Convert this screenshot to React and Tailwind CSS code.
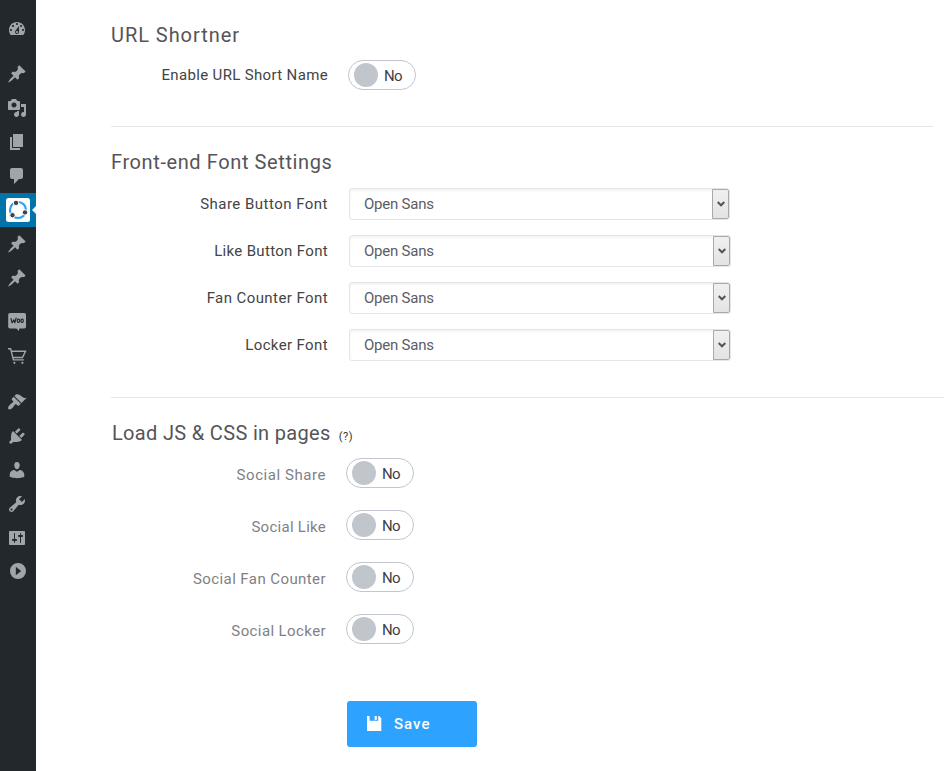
const PIN =
  "M10.44 3.02l1.82-1.82 6.36 6.35-1.83 1.82c-1.05-.68-2.48-.57-3.41.36l-.75.75c-.92.93-1.04 2.35-.35 3.41l-1.83 1.82-2.41-2.41-2.8 2.79c-.42.42-3.38 2.71-3.8 2.29s1.86-3.39 2.28-3.81l2.79-2.79L4.1 9.36l1.83-1.82c1.05.69 2.48.57 3.4-.36l.75-.75c.93-.92 1.05-2.35.36-3.41z";

const ICONS = {
  dashboard:
    "M3.76 16h12.48c1.1-1.37 1.76-3.11 1.76-5 0-4.42-3.58-8-8-8s-8 3.58-8 8c0 1.89.66 3.63 1.76 5zM10 4c.55 0 1 .45 1 1s-.45 1-1 1-1-.45-1-1 .45-1 1-1zM6 6c.55 0 1 .45 1 1s-.45 1-1 1-1-.45-1-1 .45-1 1-1zm8 0c.55 0 1 .45 1 1s-.45 1-1 1-1-.45-1-1 .45-1 1-1zm-5.37 5.55L12 7v6c0 1.1-.9 2-2 2s-2-.9-2-2c0-.57.24-1.08.63-1.45zM4 10c.55 0 1 .45 1 1s-.45 1-1 1-1-.45-1-1 .45-1 1-1zm12 0c.55 0 1 .45 1 1s-.45 1-1 1-1-.45-1-1 .45-1 1-1zm-5 3c0-.55-.45-1-1-1s-1 .45-1 1 .45 1 1 1 1-.45 1-1z",
  media:
    "M13 11V4c0-.55-.45-1-1-1h-1.67L9 1H5L3.67 3H2c-.55 0-1 .45-1 1v7c0 .55.45 1 1 1h10c.55 0 1-.45 1-1zM7 4.5c1.38 0 2.5 1.12 2.5 2.5S8.38 9.5 7 9.5 4.5 8.38 4.5 7 5.62 4.5 7 4.5zM14 6h5v10.5c0 1.38-1.12 2.5-2.5 2.5S14 17.88 14 16.5s1.12-2.5 2.5-2.5c.17 0 .34.02.5.05V9h-3V6zm-4 8.05V13h2v3.5c0 1.38-1.12 2.5-2.5 2.5S7 17.88 7 16.5 8.12 14 9.5 14c.17 0 .34.02.5.05z",
  page: "M6 15V2h10v13H6zm-1 1h8v2H3V5h2v11z",
  comment:
    "M5 2h9c1.1 0 2 .9 2 2v7c0 1.1-.9 2-2 2h-2l-5 5v-5H5c-1.1 0-2-.9-2-2V4c0-1.1.9-2 2-2z",
  appearance:
    "M14.48 11.06L7.41 3.99l1.5-1.5c.5-.56 2.3-.47 3.51.32 1.21.8 1.43 1.28 2.91 2.1 1.18.64 2.45 1.26 4.45.85zm-.71.71L6.7 4.7 4.93 6.47c-.39.39-.39 1.02 0 1.41l1.06 1.06c.39.39.39 1.03 0 1.42-.6.6-1.43 1.11-2.21 1.69-.35.26-.7.53-1.01.84C1.43 14.23.4 16.08 1.4 17.07c.99 1 2.84-.03 4.18-1.36.31-.31.58-.66.85-1.02.57-.78 1.08-1.61 1.69-2.21.39-.39 1.02-.39 1.41 0l1.06 1.06c.39.39 1.02.39 1.41 0z",
  plugins:
    "M13.11 4.36L9.87 7.6 8 5.73l3.24-3.24c.35-.34 1.05-.2 1.56.32.52.51.66 1.21.31 1.55zm-8 1.77l.91-1.12 9.01 9.01-1.19.84c-.71.71-2.63 1.16-3.82 1.16H6.14L4.9 17.26c-.59.59-1.54.59-2.12 0-.59-.58-.59-1.53 0-2.12l1.24-1.24v-3.88c0-1.13.4-3.19 1.09-3.89zm7.26 3.97l3.24-3.24c.34-.35 1.04-.21 1.55.31.52.51.66 1.21.31 1.55l-3.24 3.25z",
  users:
    "M10 9.25c-2.27 0-2.73-3.44-2.73-3.44C7 4.02 7.82 2 9.97 2c2.16 0 2.98 2.02 2.71 3.81 0 0-.41 3.44-2.68 3.44zm0 2.57L12.72 10c2.39 0 4.52 2.33 4.52 4.53v2.49s-3.65 1.13-7.24 1.13c-3.65 0-7.24-1.13-7.24-1.13v-2.49c0-2.25 1.94-4.48 4.47-4.48z",
  tools:
    "M16.68 9.77c-1.34 1.34-3.3 1.67-4.95.99l-5.41 6.52c-.99.99-2.59.99-3.58 0s-.99-2.59 0-3.57l6.52-5.42c-.68-1.65-.35-3.61.99-4.95 1.28-1.28 3.12-1.62 4.72-1.06l-2.89 2.89 2.82 2.82 2.86-2.87c.53 1.58.18 3.39-1.08 4.65zM3.81 16.21c.4.39 1.04.39 1.43 0 .4-.4.4-1.04 0-1.43-.39-.4-1.03-.4-1.43 0-.39.39-.39 1.03 0 1.43z",
  settings:
    "M18 16V4c0-.55-.45-1-1-1H3c-.55 0-1 .45-1 1v12c0 .55.45 1 1 1h14c.55 0 1-.45 1-1zM8 11h1c.55 0 1 .45 1 1s-.45 1-1 1H8v1.5c0 .28-.22.5-.5.5s-.5-.22-.5-.5V13H6c-.55 0-1-.45-1-1s.45-1 1-1h1V5.5c0-.28.22-.5.5-.5s.5.22.5.5V11zm5-2h-1c-.55 0-1-.45-1-1s.45-1 1-1h1V5.5c0-.28.22-.5.5-.5s.5.22.5.5V7h1c.55 0 1 .45 1 1s-.45 1-1 1h-1v5.5c0 .28-.22.5-.5.5s-.5-.22-.5-.5V9z",
};

function MenuItem({ d, children }) {
  return (
    <div className="flex h-[34px] items-center pl-[7px] text-[#a0a5aa]">
      <svg className="size-5 overflow-visible" viewBox="0 0 20 20" fill="currentColor" fillRule="evenodd">
        {d ? <path d={d} /> : children}
      </svg>
    </div>
  );
}

function Sidebar() {
  return (
    <nav className="flex w-9 shrink-0 flex-col bg-[#23282d] pt-3">
      <MenuItem d={ICONS.dashboard} />
      <div className="h-[11px]" />
      <MenuItem d={PIN} />
      <MenuItem d={ICONS.media} />
      <MenuItem d={ICONS.page} />
      <MenuItem d={ICONS.comment} />
      <div className="flex h-[34px] items-center justify-between bg-[#0073aa] pl-1.5">
        <svg className="size-6" viewBox="0 0 24 24" fill="none">
          <rect width="24" height="24" rx="2.5" fill="#fff" />
          <circle cx="12" cy="12" r="8" stroke="#27a0f5" strokeWidth="2.2" />
          <g fill="#3c4250" stroke="#fff" strokeWidth="1">
            <circle cx="10" cy="4.9" r="2.7" />
            <circle cx="19" cy="14.4" r="2.7" />
            <circle cx="6.5" cy="17.2" r="2.7" />
          </g>
        </svg>
        <svg className="h-2 w-1" viewBox="0 0 4 8">
          <path d="M4 0v8L0 4z" fill="#f1f1f1" />
        </svg>
      </div>
      <MenuItem d={PIN} />
      <MenuItem d={PIN} />
      <div className="h-[10px]" />
      <MenuItem>
        <path d="M3 .9h14.2a1.8 1.8 0 0 1 1.8 1.8v12a1.8 1.8 0 0 1-1.8 1.8h-4.8L11.7 19 9.5 16.5H3a1.8 1.8 0 0 1-1.8-1.8v-12A1.8 1.8 0 0 1 3 .9z" />
        <g fill="none" stroke="#23282d" strokeWidth="1.2" strokeLinejoin="round" strokeLinecap="round">
          <path d="M4 6.6l1.1 4.2 1.8-3 .9 3 1.3-4.6" />
          <ellipse cx="11.4" cy="8.8" rx="1.2" ry="1.6" />
          <ellipse cx="15.1" cy="8.8" rx="1.2" ry="1.6" />
        </g>
      </MenuItem>
      <MenuItem>
        <g fill="none" stroke="currentColor" strokeWidth="1.4">
          <path d="M1 2.7h2.6l2.8 11.2h10.4M4.5 5.2h14l-3 6.3H6" />
        </g>
        <circle cx="7.4" cy="16.8" r="1.1" />
        <circle cx="15.4" cy="16.8" r="1.1" />
      </MenuItem>
      <div className="h-3" />
      <MenuItem d={ICONS.appearance} />
      <MenuItem d={ICONS.plugins} />
      <MenuItem d={ICONS.users} />
      <MenuItem d={ICONS.tools} />
      <MenuItem d={ICONS.settings} />
      <MenuItem>
        <path d="M11 1a8 8 0 1 0 0 16 8 8 0 0 0 0-16zM8.8 4.7l5.4 4.3-5.4 4.3z" />
      </MenuItem>
    </nav>
  );
}

function Toggle() {
  return (
    <button className="flex h-[30px] w-[68px] items-center rounded-full border border-[#c1c5cd] bg-white pl-[5px] text-left text-[15px] tracking-[-0.6px] text-[#3f4047]">
      <span className="mr-[6px] size-6 rounded-full bg-[#c1c6cd]" />
      <span className="pt-[2px]">No</span>
    </button>
  );
}

function FontRow({ label, tracking, width = "w-[382px]" }) {
  return (
    <div className="mb-[15px] flex h-8 items-center">
      <span className={`w-[217px] text-right text-[15px] text-[#444] ${tracking}`}>{label}</span>
      <div
        className={`ml-[21px] flex h-8 items-stretch justify-between overflow-hidden rounded-[3px] border border-[#e3e5e8] bg-white pl-[14px] shadow-[inset_0_2px_3px_rgba(0,0,0,0.05)] ${width}`}
      >
        <span className="self-center text-[15px] tracking-[-0.22px] text-[#5b5d66]">Open Sans</span>
        <span className="flex w-[17px] items-center justify-center rounded-r-[2px] border border-[#a9a9a9] bg-linear-to-b from-[#f0f0f0] to-[#e3e3e3]">
          <svg className="h-[6px] w-[8px]" viewBox="0 0 8 6" fill="none" stroke="#555" strokeWidth="2">
            <path d="M.7 1L4 4.3 7.3 1" />
          </svg>
        </span>
      </div>
    </div>
  );
}

function SocialRow({ label, tracking }) {
  return (
    <div className="flex h-[30px] items-center">
      <span className={`w-[215px] pt-1 text-right text-[15px] text-[#7f8186] ${tracking}`}>{label}</span>
      <div className="ml-5">
        <Toggle />
      </div>
    </div>
  );
}

function Heading({ tracking, children }) {
  return <h2 className={`text-[20px] leading-[26px] whitespace-nowrap text-[#555459] ${tracking}`}>{children}</h2>;
}

export default function App() {
  return (
    <div className="flex h-[771px] w-[944px] overflow-hidden bg-white font-['Roboto',sans-serif]">
      <Sidebar />
      <main className="flex flex-1 flex-col pt-[22px] pl-[75px]">
        <section className="mr-[11px] h-[105px] border-b border-[#e5e5e5]">
          <Heading tracking="tracking-[0.95px]">URL Shortner</Heading>
          <div className="mt-3 flex h-[30px] items-center">
            <span className="w-[217px] text-right text-[15px] tracking-[0.35px] text-[#444]">Enable URL Short Name</span>
            <div className="ml-5">
              <Toggle />
            </div>
          </div>
        </section>
        <section className="h-[271px] border-b border-[#e5e5e5] pt-[22px]">
          <Heading tracking="tracking-[0.6px]">Front-end Font Settings</Heading>
          <div className="pt-[13px]">
            <FontRow label="Share Button Font" tracking="tracking-[0.48px]" width="w-[381px]" />
            <FontRow label="Like Button Font" tracking="tracking-[0.33px]" />
            <FontRow label="Fan Counter Font" tracking="tracking-[0.42px]" />
            <FontRow label="Locker Font" tracking="tracking-[0.38px]" />
          </div>
        </section>
        <section className="pt-[22px]">
          <div className="flex h-[26px] items-baseline gap-2 pl-px">
            <Heading tracking="tracking-[0.33px]">Load JS &amp; CSS in pages</Heading>
            <span className="text-[11px] tracking-[0.5px] text-[#333]">(?)</span>
          </div>
          <div className="flex flex-col gap-[22px] pt-[12px]">
            <SocialRow label="Social Share" tracking="tracking-[0.56px]" />
            <SocialRow label="Social Like" tracking="tracking-[0.27px]" />
            <SocialRow label="Social Fan Counter" tracking="tracking-[0.42px]" />
            <SocialRow label="Social Locker" tracking="tracking-[0.4px]" />
          </div>
          <button className="mt-[57px] ml-[236px] flex h-[46px] w-[130px] items-center rounded-[3px] bg-[#2ea2ff] pl-5 text-[15px] font-medium tracking-[1px] text-white">
            <svg className="mr-3 mb-[2px] size-[15px]" viewBox="0 0 15 15" fill="#fff">
              <path d="M0 0h2.6v4.8h8.6V0h1L14.3 2.2V15H0z" />
              <path d="M7.6 0h2.2v3.9H7.6z" />
            </svg>
            <span className="pt-px">Save</span>
          </button>
        </section>
      </main>
    </div>
  );
}
